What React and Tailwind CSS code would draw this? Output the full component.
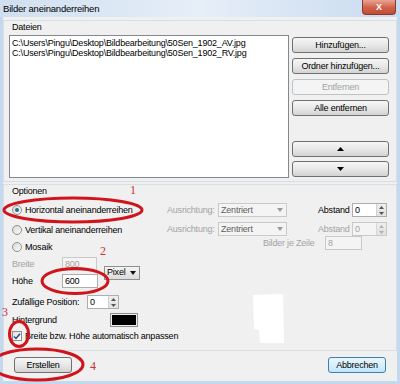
import React from "react";

const Btn = ({ children, className = "", kind = "normal" }) => {
  const style =
    kind === "disabled"
      ? "border-[#bfc3c6] bg-[#f4f4f4] text-[#a3a3a3]"
      : kind === "default"
      ? "border-[#3c7fb1] bg-gradient-to-b from-[#eaf6fd] via-[#d9effc] to-[#bee6fd] text-black"
      : "border-[#707070] bg-gradient-to-b from-[#f6f6f6] via-[#e8e8e8] to-[#d3d3d3] text-black";
  return (
    <div
      className={
        "h-[16px] flex items-center justify-center rounded-[3px] border " +
        style +
        " " +
        className
      }
    >
      {children}
    </div>
  );
};

const Radio = ({ checked }) => (
  <div className="w-[10px] h-[10px] shrink-0 rounded-full border border-[#8e8f8f] bg-gradient-to-br from-[#d8d8d8] to-[#fbfbfb] flex items-center justify-center">
    {checked && <div className="w-[4px] h-[4px] rounded-full bg-[#1f6f8b]" />}
  </div>
);

const SpinArrows = ({ disabled }) => (
  <div
    className={
      "w-[10px] h-full flex flex-col border-l " +
      (disabled ? "border-[#d6d6d6]" : "border-[#d0d0d0]")
    }
  >
    <div className="flex-1 flex items-center justify-center bg-[#ececec]">
      <svg width="5" height="3" viewBox="0 0 5 3">
        <path d="M0 3 L2.5 0 L5 3 Z" fill={disabled ? "#b0b0b0" : "#555"} />
      </svg>
    </div>
    <div className="flex-1 flex items-center justify-center bg-[#e4e4e4]">
      <svg width="5" height="3" viewBox="0 0 5 3">
        <path d="M0 0 L2.5 3 L5 0 Z" fill={disabled ? "#b0b0b0" : "#555"} />
      </svg>
    </div>
  </div>
);

const Combo = ({ text, className = "", disabled }) => (
  <div
    className={
      "h-[14px] flex items-center border pl-[2px] pr-[3px] " +
      (disabled
        ? "border-[#c9c9c9] bg-[#f4f4f4] text-[#5f5f5f]"
        : "border-[#8f8f8f] bg-gradient-to-b from-[#f4f4f4] to-[#dcdcdc] text-black") +
      " " +
      className
    }
  >
    <span>{text}</span>
    <svg className="ml-auto" width="6" height="4" viewBox="0 0 6 4">
      <path d="M0 0 L3 4 L6 0 Z" fill={disabled ? "#9a9a9a" : "#111"} />
    </svg>
  </div>
);

export default function App() {
  return (
    <div className="relative w-[400px] h-[384px] overflow-hidden bg-[#c4d8ee] font-['Liberation_Sans',Arial,sans-serif] text-[9px] tracking-[-0.2px] leading-none text-black">
      {/* Title bar */}
      <div className="h-[17px] flex items-center pl-[3px] bg-gradient-to-r from-[#d0dff0] via-[#e6eef8] to-[#c9dbef]">
        <span className="text-[9.5px] text-black">Bilder aneinanderreihen</span>
      </div>
      <div className="absolute top-0 right-[4px] w-[34px] h-[15px] rounded-b-[4px] border border-t-0 border-[#8a3a2e] bg-gradient-to-b from-[#e8a493] via-[#d0654f] to-[#c44a32] flex items-center justify-center">
        <span className="text-white text-[9px] font-bold">X</span>
      </div>

      {/* Client area */}
      <div className="mx-[3px] h-[364px] bg-[#f0f0f0] flex flex-col">
        {/* Dateien */}
        <div className="mt-[3px] h-[162px] border border-[#d5dfe5] flex flex-col">
          <div className="pl-[8px] pt-[1px] h-[11px] flex items-center">Dateien</div>
          <div className="flex mt-[3px]">
            <div className="ml-[5px] w-[280px] h-[143px] border border-[#828790] bg-white pl-[2px] pt-[2px] flex flex-col">
              <div className="h-[10px] flex items-center">C:\Users\Pingu\Desktop\Bildbearbeitung\50Sen_1902_AV.jpg</div>
              <div className="h-[10px] flex items-center">C:\Users\Pingu\Desktop\Bildbearbeitung\50Sen_1902_RV.jpg</div>
            </div>
            <div className="ml-[3px] w-[97px] mt-[2px] flex flex-col">
              <Btn>Hinzufügen...</Btn>
              <Btn className="mt-[5px]">Ordner hinzufügen...</Btn>
              <Btn className="mt-[5px]" kind="disabled">Entfernen</Btn>
              <Btn className="mt-[5px]">Alle entfernen</Btn>
              <Btn className="mt-[25px]">
                <svg width="7" height="4" viewBox="0 0 7 4"><path d="M0 4 L3.5 0 L7 4 Z" fill="#000" /></svg>
              </Btn>
              <Btn className="mt-[4px]">
                <svg width="7" height="4" viewBox="0 0 7 4"><path d="M0 0 L3.5 4 L7 0 Z" fill="#000" /></svg>
              </Btn>
            </div>
          </div>
        </div>

        {/* Optionen */}
        <div className="mt-[2px] h-[167px] border border-[#d5dfe5] flex flex-col">
          <div className="pl-[8px] pt-[1px] h-[11px] flex items-center">Optionen</div>
          <div className="flex">
            {/* left column */}
            <div className="w-[163px] shrink-0 pl-[8px] flex flex-col">
              <div className="mt-[7px] h-[14px] flex items-center gap-[3px]">
                <Radio checked />
                <span>Horizontal aneinanderreihen</span>
              </div>
              <div className="mt-[6px] h-[14px] flex items-center gap-[3px]">
                <Radio />
                <span>Vertikal aneinanderreihen</span>
              </div>
              <div className="mt-[3px] h-[14px] flex items-center gap-[3px]">
                <Radio />
                <span>Mosaik</span>
              </div>
              <div className="flex items-center">
                <div className="flex flex-col">
                  <div className="mt-[3px] h-[14px] flex items-center">
                    <span className="w-[50px] text-[#a3a3a3]">Breite</span>
                    <div className="w-[35px] h-[14px] border border-[#c9c9c9] bg-[#f4f4f4] text-[#a3a3a3] flex items-center pl-[2px]">800</div>
                  </div>
                  <div className="mt-[3px] h-[14px] flex items-center">
                    <span className="w-[50px]">Höhe</span>
                    <div className="w-[36px] h-[14px] border border-[#abadb3] bg-white flex items-center pl-[2px]">600</div>
                  </div>
                </div>
                <Combo text="Pixel" className="ml-[6px] mt-[3px] w-[36px]" />
              </div>
              <div className="mt-[7px] h-[14px] flex items-center">
                <span className="w-[75px]">Zufällige Position:</span>
                <div className="w-[32px] h-[14px] border border-[#abadb3] bg-white flex items-center">
                  <span className="pl-[2px] flex-1">0</span>
                  <SpinArrows />
                </div>
              </div>
              <div className="mt-[4px] h-[14px] flex items-center">
                <span className="w-[98px]">Hintergrund</span>
                <div className="w-[28px] h-[14px] border border-[#8d8d8d] p-[1px] bg-[#f0f0f0]">
                  <div className="w-full h-full bg-black" />
                </div>
              </div>
              <div className="mt-[2px] h-[14px] flex items-center gap-[3px] whitespace-nowrap">
                <div className="w-[10px] h-[10px] shrink-0 border border-[#8e8f8f] bg-gradient-to-br from-[#dedede] to-white flex items-center justify-center">
                  <svg width="8" height="7" viewBox="0 0 8 7"><path d="M1 3.5 L3 5.5 L7 0.8" stroke="#31468a" strokeWidth="1.5" fill="none" /></svg>
                </div>
                <span>Breite bzw. Höhe automatisch anpassen</span>
              </div>
            </div>

            {/* right column */}
            <div className="flex flex-col">
              <div className="mt-[7px] h-[14px] flex items-center">
                <span className="w-[51px] text-[#a3a3a3]">Ausrichtung:</span>
                <Combo text="Zentriert" disabled className="w-[69px]" />
                <span className="ml-[31px] w-[34px]">Abstand</span>
                <div className="w-[35px] h-[14px] border border-[#abadb3] bg-white flex items-center">
                  <span className="pl-[2px] flex-1">0</span>
                  <SpinArrows />
                </div>
              </div>
              <div className="mt-[5px] h-[14px] flex items-center">
                <span className="w-[51px] text-[#a3a3a3]">Ausrichtung:</span>
                <Combo text="Zentriert" disabled className="w-[69px]" />
                <span className="ml-[31px] w-[34px] text-[#a3a3a3]">Abstand</span>
                <div className="w-[35px] h-[14px] border border-[#c9c9c9] bg-[#f4f4f4] text-[#a3a3a3] flex items-center">
                  <span className="pl-[2px] flex-1">0</span>
                  <SpinArrows disabled />
                </div>
              </div>
              <div className="mt-0 h-[14px] flex items-center">
                <span className="ml-[96px] w-[62px] text-[#a3a3a3]">Bilder je Zeile</span>
                <div className="w-[37px] h-[14px] border border-[#c9c9c9] bg-[#f4f4f4] text-[#a3a3a3] flex items-center pl-[2px]">8</div>
              </div>
            </div>
          </div>
        </div>

        {/* Bottom buttons */}
        <div className="mt-[6px] flex justify-between px-[11px]">
          <Btn className="w-[58px]">Erstellen</Btn>
          <Btn className="w-[58px]" kind="default">Abbrechen</Btn>
        </div>
      </div>

      {/* annotations overlay */}
      <svg className="absolute left-0 top-0 pointer-events-none" width="400" height="384" viewBox="0 0 400 384">
        <path d="M253 295 L283 294 L284 343 L260 343 L259 330 L254 329 Z" fill="#ffffff" />
        <ellipse cx="73" cy="210" rx="69" ry="12" fill="none" stroke="#d0141c" strokeWidth="3" />
        <ellipse cx="75" cy="281" rx="33" ry="12.5" fill="none" stroke="#d0141c" strokeWidth="3" />
        <ellipse cx="19" cy="334" rx="9.5" ry="12.5" fill="none" stroke="#d0141c" strokeWidth="3" />
        <ellipse cx="37" cy="364.5" rx="46" ry="15.5" fill="none" stroke="#d0141c" strokeWidth="3" />
        <text x="130" y="194" fontFamily="Liberation Serif, serif" fontSize="12" fill="#c8323a">1</text>
        <text x="100" y="255" fontFamily="Liberation Serif, serif" fontSize="12" fill="#c8323a">2</text>
        <text x="2" y="316" fontFamily="Liberation Serif, serif" fontSize="12" fill="#c8323a">3</text>
        <text x="90" y="370" fontFamily="Liberation Serif, serif" fontSize="12" fill="#c8323a">4</text>
      </svg>
    </div>
  );
}
